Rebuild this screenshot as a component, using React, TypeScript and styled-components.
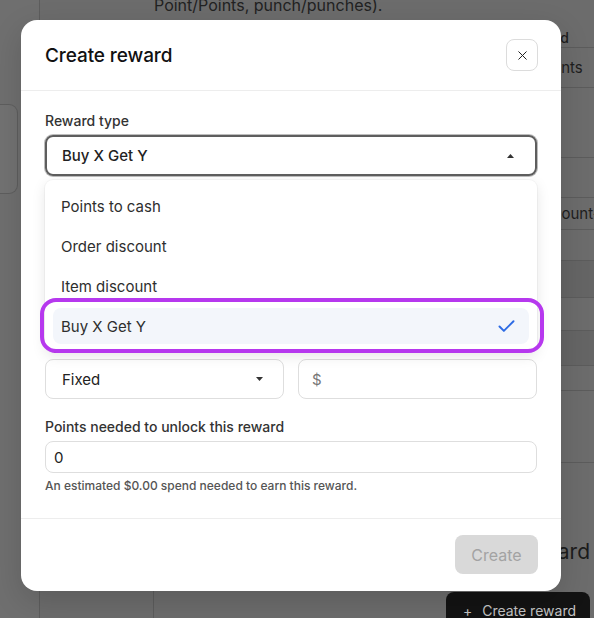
import React from "react";
import styled, { createGlobalStyle } from "styled-components";
import { X, Check } from "lucide-react";

const Global = createGlobalStyle`
  html, body { margin: 0; padding: 0; }
  body { font-family: Inter, "Liberation Sans", sans-serif; overflow: hidden; }
  * { box-sizing: border-box; }
`;

/* ---------- dimmed background page ---------- */
const Page = styled.div`
  position: relative;
  width: 594px;
  height: 618px;
  overflow: hidden;
  display: flex;
  background: #6c6c6c;
  color: #1c1c1c;
`;

const Sidebar = styled.aside`
  width: 40px;
  flex: none;
  border-right: 1px solid #5d5d5d;
  padding-top: 104px;
  background: #6f6f6f;
`;

const SideCard = styled.div`
  width: 18px;
  height: 90px;
  border: 1px solid #5e5e5e;
  border-left: none;
  border-radius: 0 9px 9px 0;
  background: #727272;
`;

const Main = styled.main`
  flex: 1;
  min-width: 0;
  display: flex;
  flex-direction: column;
`;

const Intro = styled.p`
  margin: -6px 0 0;
  padding-left: 114px;
  font-size: 16px;
  line-height: 22px;
  color: #222;
  white-space: nowrap;
`;

const Table = styled.div`
  margin-top: 12px;
  display: flex;
  flex-direction: column;
`;

const TRow = styled.div<{ $h: number; $dark?: boolean; $head?: boolean }>`
  height: ${(p) => p.$h}px;
  display: flex;
  align-items: center;
  border-bottom: 1px solid #5c5c5c;
  background: ${(p) => (p.$dark ? "#656565" : "transparent")};
  font-size: ${(p) => (p.$head ? 14 : 15)}px;
  font-weight: ${(p) => (p.$head ? 500 : 400)};
  white-space: nowrap;
  overflow: hidden;
`;

const TCell = styled.span<{ $indent: number }>`
  margin-left: ${(p) => p.$indent}px;
  color: #1e1e1e;
`;

const Bottom = styled.div`
  flex: 1;
  display: grid;
  grid-template-columns: 114px 1fr;
`;

const BottomLeft = styled.div`
  border-right: 1px solid #5c5c5c;
`;

const BottomRight = styled.div`
  display: flex;
  flex-direction: column;
  align-items: flex-end;
  justify-content: flex-end;
  padding-right: 4px;
`;

const EmptyTitle = styled.div`
  font-size: 21px;
  color: #1c1c1c;
  margin-bottom: 28px;
`;

const DarkButton = styled.div`
  display: flex;
  align-items: center;
  gap: 10px;
  height: 36px;
  margin-bottom: -10px;
  padding: 0 14px 0 17px;
  background: #131313;
  border-radius: 8px;
  color: #c4c4c4;
  font-size: 14px;
`;

/* ---------- modal ---------- */
const Modal = styled.div`
  position: absolute;
  left: 21px;
  top: 20px;
  width: 540px;
  background: #fff;
  border-radius: 16px;
  box-shadow: 0 10px 30px rgba(0, 0, 0, 0.15);
  display: flex;
  flex-direction: column;
  z-index: 10;
`;

const Header = styled.header`
  height: 71px;
  padding: 0 24px;
  display: flex;
  align-items: center;
  justify-content: space-between;
  border-bottom: 1px solid #ededed;
`;

const Title = styled.h2`
  margin: 0;
  font-size: 19px;
  font-weight: 500;
  color: #111;
  letter-spacing: -0.1px;
`;

const CloseButton = styled.button`
  width: 32px;
  height: 32px;
  border: 1px solid #dcdcdc;
  border-radius: 8px;
  background: #fff;
  display: flex;
  align-items: center;
  justify-content: center;
  padding: 0;
  color: #222;
  margin-right: -1px;
`;

const Body = styled.div`
  padding: 22px 24px 24px;
  display: flex;
  flex-direction: column;
  gap: 20px;
`;

const Field = styled.div`
  display: flex;
  flex-direction: column;
  gap: 6px;
`;

const Label = styled.label`
  font-size: 14px;
  line-height: 16px;
  font-weight: 500;
  color: #333;
`;

const SelectWrap = styled.div`
  position: relative;
`;

const Trigger = styled.div`
  height: 41px;
  border: 2px solid #5e5e5e;
  box-shadow: 0 0 0 1px #bdbdbd;
  border-radius: 8px;
  padding: 0 21px 0 15px;
  display: flex;
  align-items: center;
  justify-content: space-between;
  font-size: 15px;
  color: #222;
  font-weight: 500;
`;

const Caret = styled.svg<{ $up?: boolean }>`
  width: 7px;
  height: 4px;
  transform: ${(p) => (p.$up ? "rotate(180deg)" : "none")};
  fill: #333;
`;

const Menu = styled.ul`
  position: absolute;
  left: 0;
  right: 0;
  top: calc(100% + 4px);
  margin: 0;
  padding: 8px;
  list-style: none;
  background: #fff;
  border-radius: 8px;
  box-shadow: 0 4px 14px rgba(0, 0, 0, 0.1), 0 0 0 1px rgba(0, 0, 0, 0.03);
  display: flex;
  flex-direction: column;
  gap: 4px;
  z-index: 5;
`;

const Item = styled.li<{ $selected?: boolean }>`
  position: relative;
  height: 36px;
  padding: 0 12px 0 8px;
  border-radius: 8px;
  display: flex;
  align-items: center;
  justify-content: space-between;
  font-size: 15px;
  color: #2e2e2e;
  font-weight: 400;
  background: ${(p) => (p.$selected ? "#f3f6fb" : "transparent")};
`;

const Ring = styled.span`
  position: absolute;
  top: -10px;
  bottom: -9px;
  left: -13px;
  right: -15px;
  border: 4px solid #b638ee;
  border-radius: 16px;
  pointer-events: none;
`;

const TextArea = styled.div`
  height: 99px;
  border: 1px solid #dedede;
  border-radius: 8px;
`;

const Row = styled.div`
  display: grid;
  grid-template-columns: 1fr 1fr;
  gap: 14px;
`;

const Box = styled.div<{ $h: number; $pl: number; $muted?: boolean }>`
  height: ${(p) => p.$h}px;
  border: 1px solid #dedede;
  border-radius: 8px;
  padding: 0 20px 0 ${(p) => p.$pl}px;
  display: flex;
  align-items: center;
  justify-content: space-between;
  font-size: 15px;
  font-weight: 400;
  color: ${(p) => (p.$muted ? "#777" : "#222")};
`;

const Helper = styled.p`
  margin: -1px 0 0;
  font-size: 12px;
  line-height: 16px;
  font-weight: 500;
  color: #555;
`;

const Footer = styled.footer`
  border-top: 1px solid #ededed;
  padding: 16px 23px 17px 24px;
  display: flex;
  justify-content: flex-end;
`;

const CreateButton = styled.button`
  width: 83px;
  height: 39px;
  border: none;
  border-radius: 8px;
  background: #d9d9d9;
  color: #a3a3a3;
  font-family: inherit;
  font-size: 16px;
  font-weight: 400;
`;

const rows = [
  { h: 20, text: "Card", head: true, indent: 497 },
  { h: 40, text: "Points", indent: 499 },
  { h: 70, text: "", indent: 0 },
  { h: 40, text: "", indent: 0 },
  { h: 32, text: "Amount-off", indent: 498 },
  { h: 31, text: "", indent: 0 },
  { h: 37, text: "", dark: true, indent: 0 },
  { h: 33, text: "", indent: 0 },
  { h: 35, text: "", dark: true, indent: 0 },
  { h: 25, text: "", indent: 0 },
  { h: 72, text: "", indent: 0 },
];

const options = ["Points to cash", "Order discount", "Item discount", "Buy X Get Y"];

function CaretIcon({ up }: { up?: boolean }) {
  return (
    <Caret $up={up} viewBox="0 0 7 4">
      <path d="M0 0h7L3.5 4z" />
    </Caret>
  );
}

export default function App() {
  return (
    <Page>
      <Global />
      <Sidebar>
        <SideCard />
      </Sidebar>
      <Main>
        <Intro>Point/Points, punch/punches).</Intro>
        <Table>
          {rows.map((r, i) => (
            <TRow key={i} $h={r.h} $dark={r.dark} $head={r.head}>
              <TCell $indent={r.indent}>{r.text}</TCell>
            </TRow>
          ))}
        </Table>
        <Bottom>
          <BottomLeft />
          <BottomRight>
            <EmptyTitle>Create your first reward</EmptyTitle>
            <DarkButton>
              <span>+</span>
              <span>Create reward</span>
            </DarkButton>
          </BottomRight>
        </Bottom>
      </Main>

      <Modal role="dialog">
        <Header>
          <Title>Create reward</Title>
          <CloseButton aria-label="Close">
            <X size={15} strokeWidth={1.6} />
          </CloseButton>
        </Header>
        <Body>
          <Field>
            <Label>Reward type</Label>
            <SelectWrap>
              <Trigger>
                <span>Buy X Get Y</span>
                <CaretIcon up />
              </Trigger>
              <Menu>
                {options.map((o) => {
                  const sel = o === "Buy X Get Y";
                  return (
                    <Item key={o} $selected={sel}>
                      <span>{o}</span>
                      {sel && <Check size={21} strokeWidth={2.2} color="#2d6be4" />}
                      {sel && <Ring />}
                    </Item>
                  );
                })}
              </Menu>
            </SelectWrap>
          </Field>
          <Field>
            <Label>Description</Label>
            <TextArea />
          </Field>
          <Field>
            <Label>Type</Label>
            <Row>
              <Box $h={40} $pl={16}>
                <span>Fixed</span>
                <CaretIcon />
              </Box>
              <Box $h={40} $pl={13} $muted>
                <span>$</span>
              </Box>
            </Row>
          </Field>
          <Field>
            <Label>Points needed to unlock this reward</Label>
            <Box $h={32} $pl={8}>
              <span>0</span>
            </Box>
            <Helper>An estimated $0.00 spend needed to earn this reward.</Helper>
          </Field>
        </Body>
        <Footer>
          <CreateButton disabled>Create</CreateButton>
        </Footer>
      </Modal>
    </Page>
  );
}
